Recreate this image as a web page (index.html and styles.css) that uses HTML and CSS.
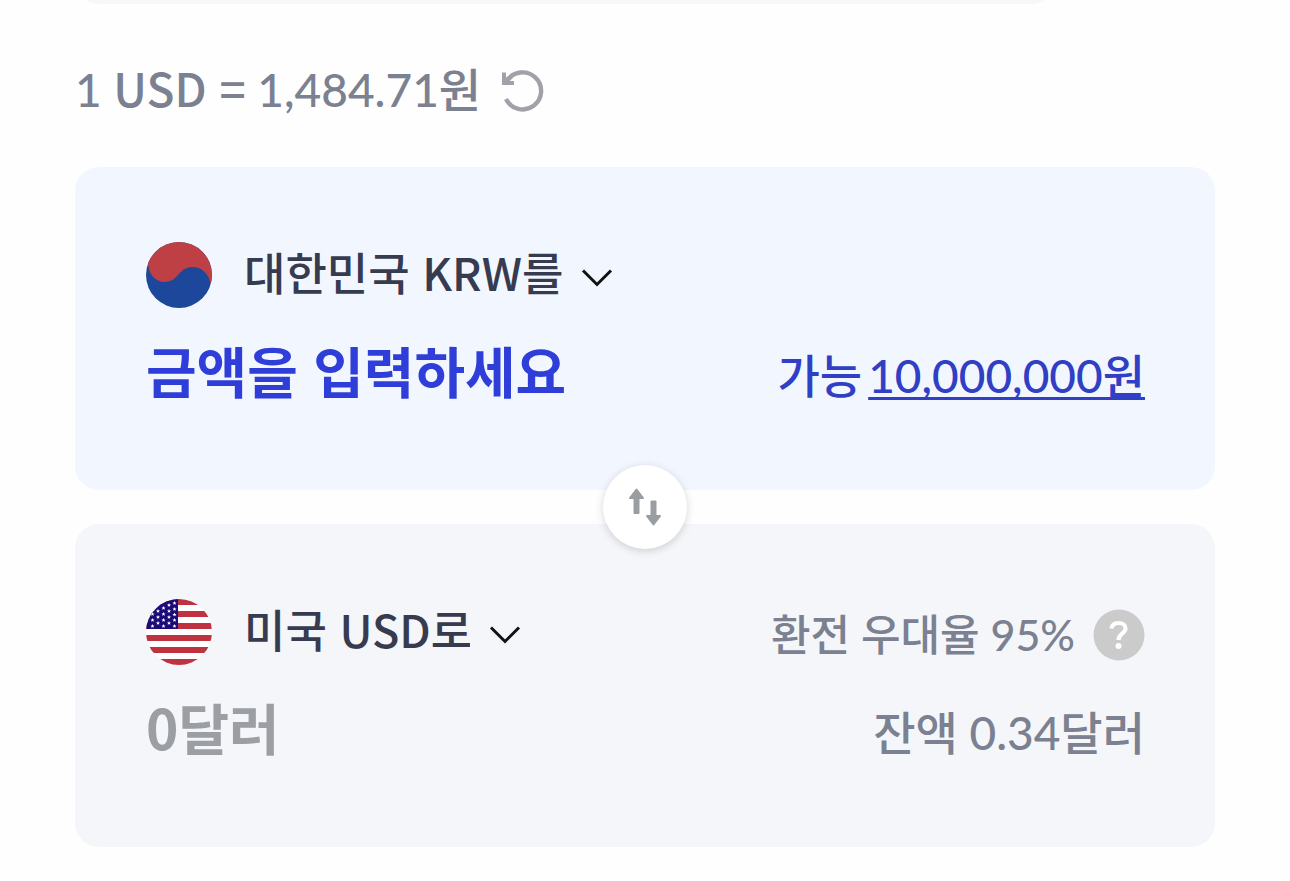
FILE: index.html
```
<!DOCTYPE html>
<html lang="ko">
<head>
    <meta charset="UTF-8">
    <meta name="viewport" content="width=device-width, initial-scale=1.0">
    <title>환전</title>
    <link rel="stylesheet" href="styles.css">
</head>
<body>
    <main>
        <div class="top-panel"></div>

        <div class="rate">
            <span>1 <span class="code">USD =</span> 1,484.71원</span>
            <button type="button" class="refresh" aria-label="환율 새로고침">
                <svg width="44" height="44" viewBox="0 0 44 44" fill="none" stroke="#a2a1a9">
                    <path d="M6 13A18.500 18.500 0 1 1 5 31" stroke-width="4.400"/>
                    <path d="M1 4.500H5V9.500L9 7L11.500 10L8.500 13H13V17H1Z" fill="#a2a1a9" stroke="none"/>
                </svg>
            </button>
        </div>

        <form class="exchange">
            <section class="card card-from">
                <div class="row">
                    <div class="currency">
                        <svg class="flag" viewBox="0 0 66 66">
                            <defs>
                                <clipPath id="round"><circle cx="33" cy="33" r="33"/></clipPath>
                            </defs>
                            <g clip-path="url(#round)">
                                <path d="M0 0H66V66H0Z" fill="#1c479a"/>
                                <path d="M0 0H66V50C65 33 57 25 46 25C33 25 32 40 19 40C9 40 2 32 2 20L0 20Z" fill="#be3f44"/>
                            </g>
                        </svg>
                        <select aria-label="보내는 통화">
                            <option>대한민국 KRW를</option>
                        </select>
                        <svg class="chevron" viewBox="0 0 32 20"><path d="M2 2.500L16 16.500L30 2.500"/></svg>
                    </div>
                </div>
                <div class="row row-amount">
                    <input class="amount" type="text" inputmode="numeric" placeholder="금액을 입력하세요" aria-label="금액">
                    <div class="limit">가능<a href="#">10,000,000원</a></div>
                </div>
            </section>

            <div class="divider">
                <button type="button" class="swap" aria-label="통화 바꾸기">
                    <svg width="34" height="38" viewBox="0 0 34 38" fill="#9a9da2" stroke="#9a9da2" stroke-width="2" stroke-linejoin="round">
                        <path d="M8.500 1.500L15 10H10.500V25H6.500V10H2Z"/>
                        <path d="M25.500 36.500L32 28H27.500V13.500H23.500V28H19Z"/>
                    </svg>
                </button>
            </div>

            <section class="card card-to">
                <div class="row">
                    <div class="currency">
                        <svg class="flag" viewBox="0 0 66 66">
                            <defs>
                                <path id="star" d="M0 -2L.6 -.6L2 -.5L.9 .4L1.300 1.800L0 1L-1.300 1.800L-.9 .4L-2 -.5L-.6 -.6Z" fill="#fff"/>
                            </defs>
                            <g clip-path="url(#round)">
                                <path fill="#fff" d="M0 0H66V66H0Z"/>
                                <path fill="#be333f" d="M0 0H66V6H0ZM0 12H66V18H0ZM0 24H66V30H0ZM0 36H66V42H0ZM0 48H66V54H0ZM0 60H66V66H0Z"/>
                                <path fill="#1a0b78" d="M0 0H32V30H0Z"/>
                                <use href="#star" x="17.500" y="9"/><use href="#star" x="17.500" y="15"/><use href="#star" x="17.500" y="21"/><use href="#star" x="17.500" y="27"/>
                                <use href="#star" x="23" y="6"/><use href="#star" x="23" y="12"/><use href="#star" x="23" y="18"/><use href="#star" x="23" y="24"/>
                                <use href="#star" x="28.500" y="4"/><use href="#star" x="28.500" y="10"/><use href="#star" x="28.500" y="15.500"/><use href="#star" x="28.500" y="21"/><use href="#star" x="28.500" y="27"/>
                                <use href="#star" x="12" y="12"/><use href="#star" x="12" y="18"/><use href="#star" x="12" y="24"/>
                                <use href="#star" x="6.500" y="15"/><use href="#star" x="6.500" y="21"/><use href="#star" x="6.500" y="27"/>
                            </g>
                        </svg>
                        <select aria-label="받는 통화">
                            <option>미국 USD로</option>
                        </select>
                        <svg class="chevron" viewBox="0 0 32 20"><path d="M2 2.500L16 16.500L30 2.500"/></svg>
                    </div>
                    <div class="discount">
                        <span>환전 우대율 95%</span>
                        <button type="button" class="help" aria-label="우대율 안내">
                            <svg width="52" height="52" viewBox="0 0 52 52">
                                <circle cx="26" cy="26" r="25.500" fill="#cbcbcb"/>
                                <path d="M18.500 19.500C19 16 21.500 14 25.500 14C30 14 32.500 16.500 32.500 19.500C32.500 24.500 25.500 24.500 25.500 31" fill="none" stroke="#fff" stroke-width="4.200"/>
                                <circle cx="25.500" cy="37" r="3" fill="#fff"/>
                            </svg>
                        </button>
                    </div>
                </div>
                <div class="row row-amount">
                    <output class="amount">0달러</output>
                    <div class="balance">잔액 0.34달러</div>
                </div>
            </section>
        </form>
    </main>
</body>
</html>
```
FILE: styles.css
```
* {
    box-sizing: border-box;
}
body {
    margin: 0;
    background-color: #fefefe;
    color: #7b8190;
    font-family: Lato, "Noto Sans CJK KR", sans-serif;
    font-size: 46px;
    font-weight: 500;
    line-height: 68px;
}
main {
    padding: 0 75px 34px;
}
button {
    padding: 0;
    border: 0;
    background: none;
    cursor: pointer;
}
svg {
    display: block;
}
.top-panel {
    width: 86%;
    height: 24px;
    margin-top: -20px;
    background-color: #f7f7f7;
    border-radius: 0 0 24px 24px;
}
.rate {
    display: flex;
    align-items: center;
    gap: 20px;
    padding: 50px 0 44px;
    line-height: 66px;
}
.rate svg {
    margin-top: 2px;
}
.code {
    font-family: "Noto Sans CJK KR", sans-serif;
}
.card {
    padding: 75px 70px 74px 71px;
    border-radius: 24px;
}
.card-from {
    background-color: #f2f7ff;
}
.card-to {
    background-color: #f4f6fa;
}
.row {
    display: flex;
    align-items: center;
    justify-content: space-between;
    height: 66px;
}
.row-amount {
    align-items: flex-start;
    height: 88px;
    margin-top: 20px;
}
.currency {
    display: flex;
    align-items: center;
}
.flag {
    width: 66px;
    height: 66px;
    margin-right: 32px;
}
.currency select {
    appearance: none;
    padding: 0 0 6px;
    border: 0;
    background: none;
    color: #373b50;
    font: 500 45px/68px "Noto Sans CJK KR", sans-serif;
    cursor: pointer;
}
.chevron {
    width: 32px;
    height: 20px;
    margin: 6px 0 0 19px;
    fill: none;
    stroke: #111;
    stroke-width: 3;
}
.amount {
    color: #9b9ea3;
    font: 700 55px/82px "Noto Sans CJK KR", sans-serif;
}
input.amount {
    flex: 1;
    min-width: 0;
    height: 82px;
    padding: 0;
    border: 0;
    outline: 0;
    background: none;
    color: #2f3ed8;
}
input.amount::placeholder {
    color: #2f3ed8;
    opacity: 1;
}
.limit,
.balance {
    padding-top: 14px;
}
.limit {
    display: flex;
    gap: 6px;
    color: #313fc4;
}
.limit a {
    color: inherit;
    text-decoration: underline;
    text-decoration-thickness: 3px;
    text-decoration-skip-ink: none;
    text-underline-offset: 4px;
}
.discount {
    display: flex;
    align-items: center;
    gap: 18px;
    padding-top: 6px;
    font-size: 43px;
}
.divider {
    position: relative;
    height: 34px;
}
.swap {
    position: absolute;
    top: 50%;
    left: 50%;
    display: flex;
    align-items: center;
    justify-content: center;
    width: 84px;
    height: 84px;
    border-radius: 50%;
    background-color: #fff;
    box-shadow: 0 2px 8px rgba(0, 0, 0, 0.16);
    transform: translate(-50%, -50%);
}
```
